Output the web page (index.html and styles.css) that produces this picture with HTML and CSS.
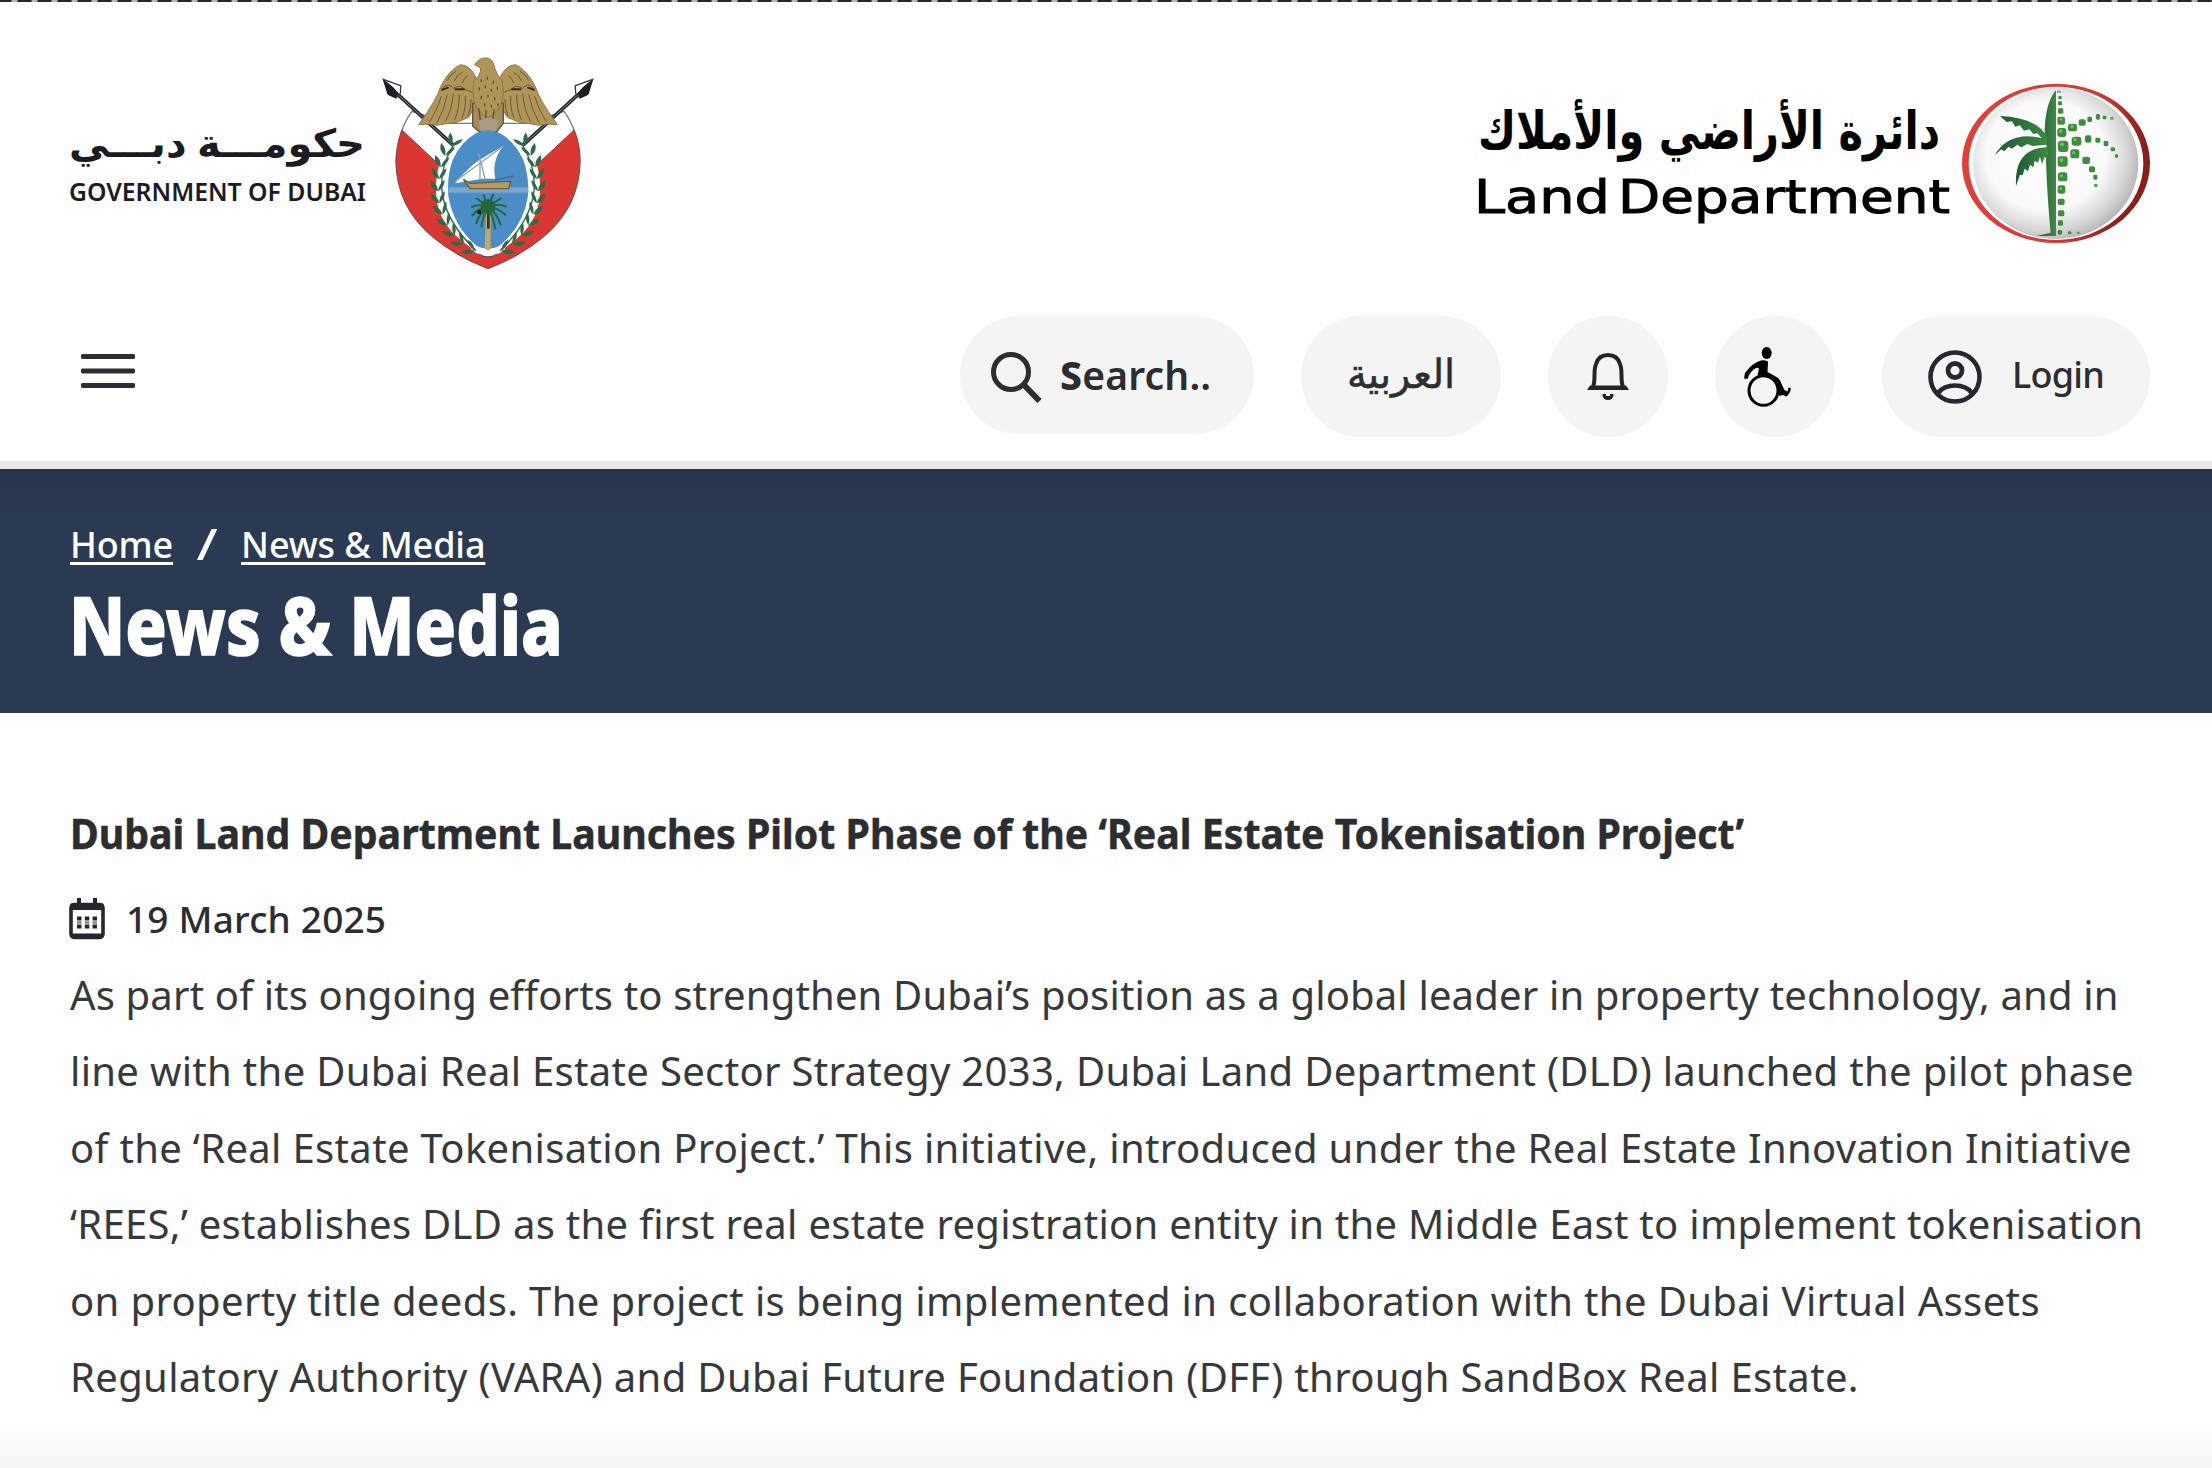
FILE: index.html
```html
<!DOCTYPE html>
<html lang="en">
<head>
<meta charset="utf-8">
<title>News &amp; Media</title>
<link rel="stylesheet" href="styles.css">
</head>
<body>
<div class="top-edge"></div>
<header class="header">
  <div class="logos">
    <svg class="logo-gov" viewBox="69 54 526 216" role="img" aria-label="Government of Dubai">
      <text class="gov-ar" x="217" y="157" text-anchor="middle" direction="rtl" textLength="296" lengthAdjust="spacingAndGlyphs">حكومـــة دبـــي</text>
      <text class="gov-en" x="69" y="201" textLength="297" lengthAdjust="spacingAndGlyphs">GOVERNMENT OF DUBAI</text>
      <g transform="translate(370 40) scale(.33333)">
        <defs>
          <g id="sprig">
            <path d="M0 16Q-24 8-23-17Q-2-8 0 16Z"/>
            <path d="M0 16Q20 4 20-19Q3-8 0 16Z"/>
          </g>
          <g id="laurel">
            <path d="M256 306Q150 470 318 632" fill="none" stroke="#2c6a48" stroke-width="4"/>
            <use href="#sprig" transform="translate(252 304) rotate(30)"/>
            <use href="#sprig" transform="translate(230 332) rotate(18)"/>
            <use href="#sprig" transform="translate(215 366) rotate(10)"/>
            <use href="#sprig" transform="translate(208 402) rotate(5)"/>
            <use href="#sprig" transform="translate(204 438)"/>
            <use href="#sprig" transform="translate(206 474) rotate(-6)"/>
            <use href="#sprig" transform="translate(214 508) rotate(-14)"/>
            <use href="#sprig" transform="translate(226 542) rotate(-24)"/>
            <use href="#sprig" transform="translate(244 574) rotate(-34)"/>
            <use href="#sprig" transform="translate(268 602) rotate(-46)"/>
            <use href="#sprig" transform="translate(300 625) rotate(-62)"/>
          </g>
          <g id="spear">
            <path d="M84 164L250 316" stroke="#24242a" stroke-width="11"/>
            <path d="M84 164L250 316" stroke="#8b8b90" stroke-width="3"/>
            <path d="M40 118L92 137L91 160L78 174L54 162Z" fill="#fff" stroke="#34343a" stroke-width="4"/>
            <path d="M40 118L68 140L88 162L76 174L54 164Z" fill="#1b1b20"/>
          </g>
          <g id="wing">
            <path d="M318 114Q302 76 272 74Q238 88 212 140Q200 180 146 254L178 252L200 256L236 250L262 246L296 232Q318 200 324 160Z" fill="#b09558" stroke="#8d7747" stroke-width="3"/>
            <g fill="none" stroke="#695936" stroke-width="3">
              <path d="M216 146Q236 124 250 146Q270 130 286 150Q304 150 318 172"/>
              <path d="M214 168Q200 214 178 246M232 164Q222 212 200 250M250 160Q246 210 226 244M268 164Q268 208 254 240M286 168Q288 206 276 234M303 178Q304 204 294 228"/>
              <path d="M232 122Q240 102 258 94M252 124Q260 106 278 96M276 130Q284 114 292 106"/>
            </g>
            <path d="M214 150L236 142M254 148L284 148" stroke="#35301f" stroke-width="6"/>
          </g>
        </defs>
        <path d="M126 214Q84 270 78 360Q78 500 190 592Q260 650 354 686Q448 650 518 592Q630 500 630 360Q624 270 582 214L470 250H238Z" fill="#fff" stroke="#777" stroke-width="4"/>
        <path d="M96 270L354 512L612 270Q630 310 630 362Q628 500 518 592Q450 648 354 685Q258 648 190 592Q80 500 78 362Q80 310 96 270Z" fill="#da3732" stroke="#8b4444" stroke-width="3"/>
        <path d="M240 306Q188 390 196 470Q208 570 320 640Q354 662 388 640Q500 570 512 470Q520 390 468 306Z" fill="#fff"/>
        <path d="M200 370Q164 520 262 600L300 630" fill="none" stroke="#da3732" stroke-width="14"/>
        <path d="M508 370Q544 520 446 600L408 630" fill="none" stroke="#da3732" stroke-width="14"/>
        <use href="#spear"/>
        <use href="#spear" transform="matrix(-1 0 0 1 708 0)"/>
        <g fill="#2c6a48">
          <use href="#laurel"/>
          <use href="#laurel" transform="matrix(-1 0 0 1 708 0)"/>
        </g>
        <use href="#wing"/>
        <use href="#wing" transform="matrix(-1 0 0 1 708 0)"/>
        <path d="M308 190H400V250L380 276H328L308 258Z" fill="#a38c5a" stroke="#5d5340" stroke-width="4"/>
        <path d="M314 74Q328 52 350 54Q370 56 374 84Q382 108 396 122Q404 160 394 190Q380 222 354 232Q328 222 314 190Q304 158 312 122Q332 108 332 84Z" fill="#b09558" stroke="#8d7747" stroke-width="3"/>
        <path d="M334 118v9M352 110v9M370 122v9M328 142v9M346 136v9M364 146v9M382 140v9M334 168v9M354 164v9M374 172v9M344 190v9M364 194v9M384 190v8M326 204l6 44M348 210v36M372 208l-4 40" stroke="#5e5132" stroke-width="4"/>
        <path d="M326 242Q354 224 384 242L378 272H330Z" fill="#a99c85"/>
        <path d="M318 280Q354 262 390 280Q436 306 460 360Q478 410 474 468Q460 558 388 618Q354 634 320 618Q250 558 235 468Q230 410 248 360Q272 306 318 280Z" fill="#4b8dc6"/>
        <path d="M235 450H475" stroke="#7ba6cd" stroke-width="16"/>
        <path d="M400 318Q364 362 376 416H336L256 430Q270 408 316 368Q356 342 400 318Z" fill="#fff"/>
        <path d="M400 318L256 424M326 340L346 420M330 362V420" fill="none" stroke="#8fa3b4" stroke-width="4"/>
        <path d="M280 418L300 430L422 424L416 446H300Z" fill="#b49a63" stroke="#6e5c38" stroke-width="4"/>
        <path d="M376 420L430 408" stroke="#3f6f99" stroke-width="5"/>
        <path d="M348 520H362V626L354 632L344 626Z" fill="#c3a766"/>
        <path d="M355 516V566" stroke="#1f3c2c" stroke-width="8"/>
        <circle cx="354" cy="500" r="22" fill="#22683a"/>
        <path d="M354 500L340 464M354 500L370 462M354 500L318 474M354 500L394 474M354 500Q322 490 304 502M354 500Q384 488 410 500M354 500Q324 504 306 528M354 500Q386 504 408 526M354 500Q328 520 318 552M354 500Q382 520 392 556M354 500Q338 528 334 562M354 500Q370 530 376 568" fill="none" stroke="#22683a" stroke-width="6"/>
        <circle cx="328" cy="516" r="7" fill="#102a20"/>
        <path d="M328 630Q354 658 382 630" fill="none" stroke="#fff" stroke-width="12"/>
        <path d="M326 642Q354 660 382 642" fill="none" stroke="#555" stroke-width="4"/>
      </g>
    </svg>
    <svg class="logo-dld" viewBox="1470 80 684 170" role="img" aria-label="Land Department">
      <defs>
        <radialGradient id="ball" cx=".44" cy=".45" r=".58">
          <stop offset="0" stop-color="#fff"/><stop offset=".62" stop-color="#fafafa"/>
          <stop offset=".85" stop-color="#d6d6d6"/><stop offset="1" stop-color="#b5b5b5"/>
        </radialGradient>
        <linearGradient id="ring" x1="0" y1="0" x2="1" y2=".25">
          <stop offset="0" stop-color="#e5403c"/><stop offset=".7" stop-color="#d63a36"/><stop offset="1" stop-color="#86201c"/>
        </linearGradient>
        <linearGradient id="leaf" x1="0" y1="0" x2="1" y2="0">
          <stop offset="0" stop-color="#1d5a37"/><stop offset="1" stop-color="#3f8a42"/>
        </linearGradient>
      </defs>
      <text class="dld-ar" x="1709" y="149" text-anchor="middle" direction="rtl" textLength="462" lengthAdjust="spacingAndGlyphs">دائرة الأراضي والأملاك</text>
      <text class="dld-en" x="1474" y="213" textLength="136" lengthAdjust="spacingAndGlyphs">Land</text>
      <text class="dld-en" x="1618" y="213" textLength="332" lengthAdjust="spacingAndGlyphs">Department</text>
      <g transform="translate(1940 60) scale(.33333)">
        <ellipse cx="348" cy="310" rx="282" ry="239" fill="url(#ring)"/>
        <ellipse cx="348" cy="310" rx="262" ry="230" fill="#fff"/>
        <ellipse cx="347" cy="310" rx="248" ry="227" fill="url(#ball)"/>
        <path d="M346 92Q316 130 314 212L322 280L318 300Q322 420 332 518L290 528H348V92Z" fill="url(#leaf)"/>
        <g fill="url(#leaf)">
          <path d="M322 232Q290 172 180 168L200 186L216 184L226 200L240 196L252 212L268 208L280 222L292 220L320 250Z"/>
          <path d="M322 238Q210 206 164 286L184 268L192 274L206 260L216 266L232 254L244 262L262 252L278 258L320 254Z"/>
          <path d="M322 262Q222 264 228 378L240 344L248 346L254 326L264 334L270 314L280 322L284 302L294 308L300 290L306 312L314 290L322 300Z"/>
        </g>
        <g fill="#3d8d3d">
          <rect x="351" y="92" width="11" height="7" opacity=".6"/><rect x="355" y="108" width="10" height="10" rx="3"/><rect x="354" y="124" width="12" height="12" rx="3"/>
          <rect x="354" y="145" width="16" height="16" rx="4"/><rect x="352" y="170" width="23" height="24" rx="6"/><rect x="352" y="204" width="27" height="27" rx="8"/>
          <rect x="354" y="242" width="31" height="34" rx="9"/><rect x="353" y="289" width="30" height="31" rx="8"/><rect x="354" y="337" width="28" height="27" rx="8"/>
          <rect x="353" y="376" width="23" height="25" rx="7"/><rect x="353" y="416" width="21" height="19" rx="6"/><rect x="354" y="451" width="19" height="18" rx="5"/>
          <rect x="354" y="481" width="15" height="16" rx="4"/><rect x="353" y="510" width="13" height="14" rx="4"/><rect x="384" y="514" width="10" height="9" rx="3"/><rect x="411" y="515" width="7" height="7" rx="3"/>
          <rect x="384" y="191" width="27" height="23" rx="8"/><rect x="416" y="178" width="21" height="19" rx="6"/><rect x="442" y="170" width="14" height="16" rx="4"/><rect x="468" y="162" width="12" height="17" rx="4"/><rect x="488" y="167" width="11" height="11" rx="3"/><rect x="510" y="170" width="11" height="9" rx="3" opacity=".7"/>
          <rect x="395" y="230" width="29" height="27" rx="9"/><rect x="435" y="226" width="19" height="22" rx="6"/><rect x="466" y="233" width="15" height="15" rx="4"/><rect x="491" y="243" width="14" height="15" rx="4"/><rect x="512" y="262" width="13" height="12" rx="4"/><rect x="525" y="283" width="9" height="10" rx="3"/>
          <rect x="391" y="268" width="27" height="27" rx="8"/><rect x="427" y="290" width="23" height="22" rx="7"/><rect x="447" y="319" width="18" height="18" rx="5"/><rect x="460" y="344" width="12" height="15" rx="4"/><rect x="462" y="371" width="11" height="10" rx="3" opacity=".8"/>
        </g>
        <g fill="#74c25c">
          <circle cx="363" cy="178" r="4"/><circle cx="362" cy="213" r="5"/><circle cx="366" cy="253" r="6"/><circle cx="364" cy="300" r="6"/><circle cx="364" cy="347" r="5"/><circle cx="362" cy="386" r="4"/><circle cx="396" cy="199" r="5"/><circle cx="405" cy="239" r="5"/><circle cx="401" cy="278" r="5"/>
        </g>
      </g>
    </svg>
  </div>
  <nav class="toolbar">
    <svg class="burger" viewBox="0 0 54 36" role="img" aria-label="Menu"><path d="M2 4.500H52M2 19H52M2 33.500H52" stroke="#2b2d31" stroke-width="4.800" stroke-linecap="round"/></svg>
    <div class="pills">
      <a class="pill search">
        <svg width="54" height="54" viewBox="0 0 54 54"><g fill="none" stroke="#2b2d31"><circle cx="21" cy="21" r="17.500" stroke-width="5"/><path d="M34 34L49.500 50" stroke-width="6"/></g></svg>
        <span class="search-label"><b>S</b>earch..</span>
      </a>
      <a class="pill lang" lang="ar" dir="rtl"><span class="lang-label">العربية</span></a>
      <a class="pill round" aria-label="Notifications">
        <svg width="44" height="50" viewBox="0 0 44 50"><path d="M7 35C10 27 7 19 10 12C12 5 17 3 22 3S32 5 34 12C37 19 34 27 37 35" fill="none" stroke="#222426" stroke-width="4"/><path d="M1 38L4 33.500H40L43 38Z" fill="#222426"/><path d="M16.500 42H20V44H24V42H27.500V43Q27 48 22 48T16.500 43Z" fill="#222426"/></svg>
      </a>
      <a class="pill round access" aria-label="Accessibility">
        <svg width="48" height="60" viewBox="0 0 48 60"><ellipse cx="22.700" cy="6" rx="5" ry="6"/><path d="M17 13.500Q20 12.500 24 14.500L23.500 25L30 28.500Q36 31 38 38L40.500 43L43.500 44.500L44.500 40.500L47 41.500Q46 47 42.500 49.500L39 48L35.500 49L33.500 41Q32 34 27 31.500Q20 28.500 13.500 28L15 22Q14 20 12 21Q6 24 3.500 32L0 31.500L1 26Q8 16 17 13.500Z"/><ellipse cx="19.500" cy="43.500" rx="14.500" ry="14.800" fill="none" stroke="#000" stroke-width="3"/></svg>
      </a>
      <a class="pill login">
        <svg width="54" height="54" viewBox="0 0 54 54"><g fill="none" stroke="#24282f"><circle cx="27" cy="27" r="24.500" stroke-width="4.600"/><circle cx="27" cy="20.500" r="7" stroke-width="4.800"/><path d="M10.500 42.500Q16 35.500 27 35.500T43.500 42.500" stroke-width="4.600"/></g></svg>
        <span>Login</span>
      </a>
    </div>
  </nav>
</header>
<section class="banner">
  <div class="crumbs"><a>Home</a><span class="sep">/</span><a>News &amp; Media</a></div>
  <h1>News &amp; Media</h1>
</section>
<main class="article">
  <h2>Dubai Land Department Launches Pilot Phase of the ‘Real Estate Tokenisation Project’</h2>
  <div class="date">
    <svg width="36" height="42" viewBox="0 0 36 42"><rect x="2" y="6.500" width="32" height="33" rx="3.500" fill="none" stroke="#24272b" stroke-width="3.600"/><path d="M1 12V8Q1 5 4 5H32Q35 5 35 8V12Z" fill="#24272b"/><path d="M10 0V7M26 0V7" stroke="#24272b" stroke-width="4"/><path d="M2 37H34" stroke="#24272b" stroke-width="3"/><path d="M8 20.500H28M8 28.500H28" stroke="#24272b" stroke-width="4" stroke-dasharray="4.500 3.300"/><path d="M8 24.500H28" stroke="#24272b" stroke-width="2.500" stroke-dasharray="4.500 3.300" opacity=".55"/></svg>
    <span>19 March 2025</span>
  </div>
  <p class="body">
    <span class="l1">As part of its ongoing efforts to strengthen Dubai’s position as a global leader in property technology, and in</span>
    <span class="l2">line with the Dubai Real Estate Sector Strategy 2033, Dubai Land Department (DLD) launched the pilot phase</span>
    <span class="l3">of the ‘Real Estate Tokenisation Project.’ This initiative, introduced under the Real Estate Innovation Initiative</span>
    <span class="l4">‘REES,’ establishes DLD as the first real estate registration entity in the Middle East to implement tokenisation</span>
    <span class="l5">on property title deeds. The project is being implemented in collaboration with the Dubai Virtual Assets</span>
    <span class="l6">Regulatory Authority (VARA) and Dubai Future Foundation (DFF) through SandBox Real Estate.</span>
  </p>
</main>
</body>
</html>
```
FILE: styles.css
```css
* { box-sizing: border-box; }

body {
  margin: 0;
  height: 1468px;
  display: flex;
  flex-direction: column;
  overflow: hidden;
  background: #fefefe;
  color: #2b2d31;
  font-family: "Noto Sans", "Open Sans", sans-serif;
}

h1, h2, p { margin: 0; }

.top-edge {
  height: 2px;
  background: repeating-linear-gradient(90deg, #262626 0 11px, #b5b5b5 12px 17px, #262626 18px 20px);
}

.header {
  height: 467px;
  padding: 52px 58px 0 69px;
  border-bottom: 8px solid #e8e8e8;
}

.logos {
  display: flex;
  justify-content: space-between;
  height: 262px;
}

.logo-gov { width: 526px; height: 216px; }
.logo-dld { width: 684px; height: 170px; margin-top: 26px; }
.gov-ar { font: 700 39px "Noto Sans", "DejaVu Sans", sans-serif; fill: #1d1b22; }
.gov-en { font: 600 26px "Noto Sans", sans-serif; fill: #1d1b22; }
.dld-ar { font: 700 52px "DejaVu Sans", sans-serif; }
.dld-en { font: 400 47px "DejaVu Sans", sans-serif; stroke: #000; stroke-width: 1; }

.toolbar {
  display: flex;
  justify-content: space-between;
  align-items: flex-start;
  padding: 0 4px 0 12px;
}

.burger { width: 54px; height: 36px; margin-top: 36px; }

.pills { display: flex; gap: 47px; }

.pill {
  display: flex;
  align-items: center;
  justify-content: center;
  height: 121px;
  border-radius: 61px;
  background: #f4f4f4;
}

.search {
  width: 294px;
  height: 118px;
  justify-content: flex-start;
  gap: 16px;
  padding-left: 30px;
  border-radius: 59px;
}

.search svg { margin-top: 6px; }
.search-label { margin-top: -2px; font-size: 39px; font-weight: 600; letter-spacing: .2px; }
.search-label b { font-weight: 800; }
.lang { width: 200px; }
.lang-label { margin-top: -8px; font-size: 40px; -webkit-text-stroke: .5px #2b2d31; }
.round { width: 120px; }
.access svg { margin-left: -15px; }
.login { width: 268px; gap: 30px; font-size: 36px; font-weight: 500; letter-spacing: -.8px; }
.login span { margin-top: -4px; }

.banner {
  height: 244px;
  padding: 49px 70px 0;
  color: #fff;
  background: linear-gradient(#26354a, #2b3a53 46px);
}

.crumbs {
  display: flex;
  height: 52px;
  font-size: 36px;
  font-weight: 500;
  line-height: 54px;
  letter-spacing: -.15px;
}

.crumbs a {
  text-decoration: underline;
  text-decoration-thickness: 3px;
  text-underline-offset: 4px;
}

.sep { width: 68px; text-align: center; font-size: 44px; line-height: 50px; transform: scaleX(1.25); }

h1 {
  width: max-content;
  margin-left: -1px;
  font-size: 80px;
  font-weight: 800;
  line-height: 107px;
  transform: scaleX(.856);
  transform-origin: left;
  -webkit-text-stroke: 1.5px #fff;
}

.article {
  flex: 1;
  padding: 90px 70px 0;
  background: linear-gradient(to top, #f5f5f5, #fefefe 44px);
}

h2 {
  width: max-content;
  font-size: 42px;
  font-weight: 700;
  line-height: 60px;
  transform: scaleX(.935);
  transform-origin: left;
  -webkit-text-stroke: .5px #2b2d31;
}

.date {
  display: flex;
  align-items: center;
  gap: 21px;
  height: 60px;
  margin-top: 26px;
  margin-left: -1px;
  font-size: 37px;
  font-weight: 500;
  letter-spacing: .2px;
}

.date span { margin-top: -2px; }

.body { margin-top: 8px; font-size: 40px; line-height: 76.4px; color: #36383c; }
.body span { display: block; white-space: nowrap; }
.l1 { letter-spacing: .16px; }
.l2 { letter-spacing: .32px; }
.l3 { letter-spacing: .34px; }
.l4 { letter-spacing: .29px; }
.l5 { letter-spacing: .37px; }
.l6 { letter-spacing: .35px; }
```
